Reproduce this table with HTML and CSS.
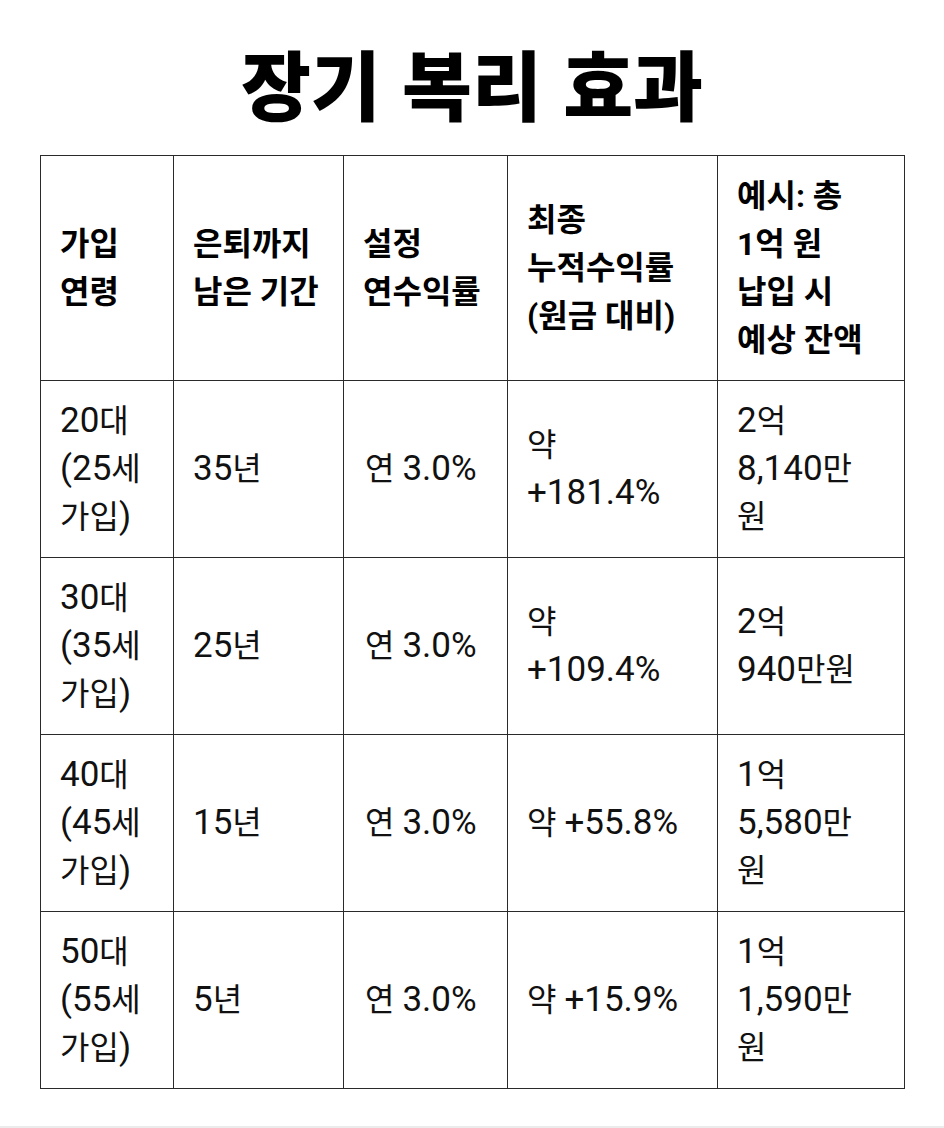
FILE: index.html
```html
<!DOCTYPE html>
<html lang="ko">
<head>
<meta charset="utf-8">
<title>장기 복리 효과</title>
<link rel="stylesheet" href="styles.css">
</head>
<body>
<main class="page">
  <h1 class="title">장기 복리 효과</h1>
  <table class="grid">
    <colgroup>
      <col class="c1"><col class="c2"><col class="c3"><col class="c4"><col class="c5">
    </colgroup>
    <thead>
      <tr>
        <th>가입<br>연령</th>
        <th>은퇴까지<br>남은 기간</th>
        <th>설정<br>연수익률</th>
        <th>최종<br>누적수익률<br>(원금 대비)</th>
        <th>예시: 총<br>1억 원<br>납입 시<br>예상 잔액</th>
      </tr>
    </thead>
    <tbody>
      <tr>
        <td><span class="num">20</span>대<br><span class="num">(25</span>세<br>가입<span class="num">)</span></td>
        <td><span class="num">35</span>년</td>
        <td class="rate">연 <span class="num">3.0%</span></td>
        <td>약<br><span class="num">+181.4%</span></td>
        <td><span class="num">2</span>억<br><span class="num">8,140</span>만<br>원</td>
      </tr>
      <tr>
        <td><span class="num">30</span>대<br><span class="num">(35</span>세<br>가입<span class="num">)</span></td>
        <td><span class="num">25</span>년</td>
        <td class="rate">연 <span class="num">3.0%</span></td>
        <td>약<br><span class="num">+109.4%</span></td>
        <td><span class="num">2</span>억<br><span class="num">940</span>만원</td>
      </tr>
      <tr>
        <td><span class="num">40</span>대<br><span class="num">(45</span>세<br>가입<span class="num">)</span></td>
        <td><span class="num">15</span>년</td>
        <td class="rate">연 <span class="num">3.0%</span></td>
        <td>약 <span class="num">+55.8%</span></td>
        <td><span class="num">1</span>억<br><span class="num">5,580</span>만<br>원</td>
      </tr>
      <tr>
        <td><span class="num">50</span>대<br><span class="num">(55</span>세<br>가입<span class="num">)</span></td>
        <td><span class="num">5</span>년</td>
        <td class="rate">연 <span class="num">3.0%</span></td>
        <td>약 <span class="num">+15.9%</span></td>
        <td><span class="num">1</span>억<br><span class="num">1,590</span>만<br>원</td>
      </tr>
    </tbody>
  </table>
</main>
</body>
</html>
```

FILE: styles.css
```css
html {
  background: #ececec;
}
body {
  margin: 0;
  background: #ffffff;
  height: 1126px;
  font-family: Roboto, "Noto Sans CJK KR", sans-serif;
  color: #111;
}
.page {
  padding-top: 34px;
}
.title {
  margin: 0 0 25px;
  text-align: center;
  font-family: "Noto Sans CJK KR", sans-serif;
  font-weight: 900;
  font-size: 76px;
  line-height: 96px;
  color: #000;
}
.grid {
  margin-left: 40px;
  width: 864px;
  table-layout: fixed;
  border-collapse: collapse;
  font-size: 32px;
  line-height: 48px;
}
.c1 { width: 133px; }
.c2 { width: 170px; }
.c3 { width: 164px; }
.c4 { width: 210px; }
.c5 { width: 187px; }
.grid th,
.grid td {
  border: 1px solid #2a2a2a;
  padding: 16px 19px;
  text-align: left;
  vertical-align: middle;
  word-break: keep-all;
  white-space: nowrap;
}
.grid th {
  font-weight: 700;
  color: #000;
}
.grid td {
  font-weight: 400;
}
.grid td.rate {
  padding-left: 21px;
}
.num {
  font-family: Roboto, sans-serif;
  font-size: 35px;
  line-height: 1;
}
```
